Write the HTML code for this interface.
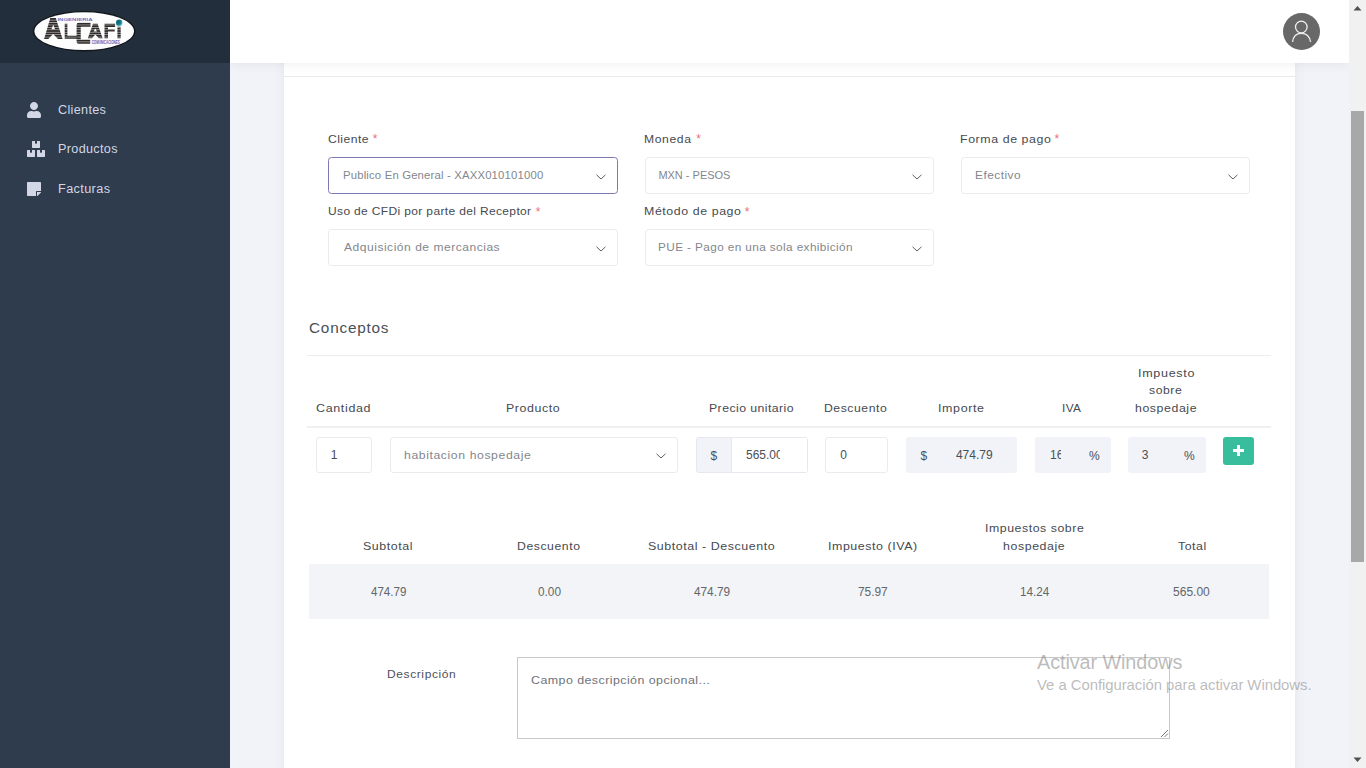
<!DOCTYPE html>
<html><head><meta charset="utf-8"><title>Factura</title>
<style>
*{box-sizing:border-box;margin:0;padding:0}
html,body{width:1366px;height:768px;overflow:hidden}
body{background:#f1f3f8;font-family:"Liberation Sans",sans-serif;position:relative}
.t{position:absolute;white-space:pre;line-height:normal;font-family:"Liberation Sans",sans-serif}
.abs{position:absolute}
#sidebar{left:0;top:0;width:230px;height:768px;background:#2e3c4e}
#brand{left:0;top:0;width:230px;height:63px;background:#222e3c}
#card{left:284px;top:-40px;width:1011px;height:900px;background:#fff;box-shadow:0 0 12px rgba(20,20,40,0.06)}
#header{left:230px;top:0;width:1119px;height:63px;background:#fff;box-shadow:0 2px 10px rgba(0,0,0,0.06)}
.sel{position:absolute;height:37px;border:1px solid #e9ebef;border-radius:3.5px;background:#fff}
.chev{position:absolute;width:10px;height:6px}
.inp{position:absolute;height:36px;border:1px solid #e9ebef;border-radius:3px;background:#fff}
.grp{position:absolute;height:36px;background:#f1f3f8;border-radius:3px}
.hline{position:absolute;height:1px;background:#ebedf0}
#scroll{left:1349px;top:0;width:17px;height:768px;background:#f1f1f1}
#thumb{left:1351px;top:111px;width:13px;height:451px;background:#a8a8a8}
</style></head>
<body>
<div id="card" class="abs"></div>
<div class="hline" style="left:284px;top:76px;width:1011px;background:#e8e9ec"></div>
<div id="header" class="abs"></div>
<div id="sidebar" class="abs"></div>
<div id="brand" class="abs"></div>

<!-- logo -->
<svg class="abs" style="left:0;top:0" width="230" height="63" viewBox="0 0 230 63">
  <defs>
    <pattern id="stripes" x="0" y="18.1" width="4" height="2.42" patternUnits="userSpaceOnUse">
      <rect x="0" y="0" width="4" height="1.95" fill="#302b2b"/>
    </pattern>
    <radialGradient id="globe" cx="0.35" cy="0.35" r="0.7">
      <stop offset="0" stop-color="#0c5f70"/><stop offset="0.6" stop-color="#1a8090"/><stop offset="1" stop-color="#8fd6dc"/>
    </radialGradient>
  </defs>
  <ellipse cx="84.2" cy="31.2" rx="51.2" ry="20.2" fill="#0d0d0d" opacity="0.75"/>
  <ellipse cx="84.2" cy="31.2" rx="49.8" ry="18.9" fill="#fdfdfd"/>
  <g fill="url(#stripes)">
    <path fill-rule="evenodd" d="M44.1 39 L50.3 18.1 L55.8 18.1 L62.6 39 L58 39 L53.1 34 L48.3 39 Z M51.4 29.2 L55.1 29.2 L53.25 24.8 Z"/>
    <path d="M64.7 23.75 L67.4 23.75 L67.4 35.8 L77 35.8 L77 38.75 L64.7 38.75 Z"/>
    <path d="M78.6 22.8 L90.5 22.8 L90.5 26.7 L80.75 26.7 L80.75 39.6 L90.2 39.6 L90.2 43.75 L78.6 43.75 Q76.6 43.75 76.6 41.75 L76.6 24.8 Q76.6 22.8 78.6 22.8 Z"/>
    <path fill-rule="evenodd" d="M87.8 38.3 L93 23.75 L97.6 23.75 L102.6 38.3 L98.8 38.3 L95.3 34.6 L92 38.3 Z M93.6 31.5 L97 31.5 L95.3 28.6 Z"/>
    <path d="M104.5 23.75 L115.1 23.75 L115.1 27.1 L108 27.1 L108 29.2 L114.7 29.2 L114.7 31.6 L108 31.6 L108 38.3 L104.5 38.3 Z"/>
    <path d="M117.4 26.7 L120.7 26.7 L120.7 38.3 L117.4 38.3 Z"/>
  </g>
  <text x="57.4" y="20.7" font-family="Liberation Sans" font-size="3.2" font-weight="bold" fill="#7a70bd" textLength="35.2" lengthAdjust="spacingAndGlyphs">INGENIERIA</text>
  <text x="91.7" y="43.8" font-family="Liberation Sans" font-size="4.9" font-weight="bold" fill="#6356ad" textLength="28" lengthAdjust="spacingAndGlyphs">COMUNICACIONES</text>
  <circle cx="119.25" cy="22.9" r="3.3" fill="url(#globe)"/>
</svg>

<!-- sidebar icons -->
<svg class="abs" style="left:27px;top:102px" width="14" height="16" viewBox="0 0 448 512"><path fill="#d3d6e4" d="M224 256c70.7 0 128-57.3 128-128S294.7 0 224 0 96 57.3 96 128s57.3 128 128 128zm89.6 32h-16.7c-22.2 10.2-46.9 16-72.9 16s-50.6-5.8-72.9-16h-16.7C60.2 288 0 348.2 0 422.4V464c0 26.5 21.5 48 48 48h352c26.5 0 48-21.5 48-48v-41.6c0-74.2-60.2-134.4-134.4-134.4z"/></svg>
<svg class="abs" style="left:27px;top:141px" width="18" height="16" viewBox="0 0 576 512"><path fill="#d3d6e4" d="M560 288h-80v96l-32-21.3-32 21.3v-96h-80c-8.8 0-16 7.2-16 16v192c0 8.8 7.2 16 16 16h224c8.8 0 16-7.2 16-16V304c0-8.8-7.2-16-16-16zm-384-64h224c8.8 0 16-7.2 16-16V16c0-8.8-7.2-16-16-16h-80v96l-32-21.3L256 96V0h-80c-8.8 0-16 7.2-16 16v192c0 8.8 7.2 16 16 16zm64 64h-80v96l-32-21.3L96 384v-96H16c-8.8 0-16 7.2-16 16v192c0 8.8 7.2 16 16 16h224c8.8 0 16-7.2 16-16V304c0-8.8-7.2-16-16-16z"/></svg>
<svg class="abs" style="left:27px;top:181px" width="14" height="16" viewBox="0 0 448 512"><path fill="#d3d6e4" d="M312 320h136V56c0-13.3-10.7-24-24-24H24C10.7 32 0 42.7 0 56v400c0 13.3 10.7 24 24 24h264V344c0-13.2 10.8-24 24-24zm129 55l-98 98c-4.5 4.5-10.6 7-17 7h-6V352h128v6.1c0 6.3-2.5 12.4-7 16.9z"/></svg>

<!-- avatar -->
<svg class="abs" style="left:1283px;top:13px" width="37" height="37" viewBox="0 0 37 37"><circle cx="18.5" cy="18.5" r="18.5" fill="#686868"/><circle cx="18.3" cy="14" r="5.8" fill="none" stroke="#f0f0f0" stroke-width="1.3"/><path d="M9.6 29 Q10.5 20.4 18.3 20.4 Q26.1 20.4 27.6 29" fill="none" stroke="#f0f0f0" stroke-width="1.3"/></svg>

<!-- selects row 1 -->
<div class="sel" style="left:328px;top:157px;width:290px;border-color:#7d7ab3"></div>
<div class="sel" style="left:645px;top:157px;width:289px"></div>
<div class="sel" style="left:961px;top:157px;width:289px"></div>
<div class="sel" style="left:328px;top:229px;width:290px"></div>
<div class="sel" style="left:645px;top:229px;width:289px"></div>
<svg class="chev" style="left:596px;top:174px" viewBox="0 0 10 6"><path d="M0.5 0.8 L5 5 L9.5 0.8" fill="none" stroke="#5f5f5f" stroke-width="1"/></svg>
<svg class="chev" style="left:912px;top:174px" viewBox="0 0 10 6"><path d="M0.5 0.8 L5 5 L9.5 0.8" fill="none" stroke="#5f5f5f" stroke-width="1"/></svg>
<svg class="chev" style="left:1228px;top:174px" viewBox="0 0 10 6"><path d="M0.5 0.8 L5 5 L9.5 0.8" fill="none" stroke="#5f5f5f" stroke-width="1"/></svg>
<svg class="chev" style="left:596px;top:246px" viewBox="0 0 10 6"><path d="M0.5 0.8 L5 5 L9.5 0.8" fill="none" stroke="#5f5f5f" stroke-width="1"/></svg>
<svg class="chev" style="left:912px;top:246px" viewBox="0 0 10 6"><path d="M0.5 0.8 L5 5 L9.5 0.8" fill="none" stroke="#5f5f5f" stroke-width="1"/></svg>

<!-- conceptos lines -->
<div class="hline" style="left:307px;top:355px;width:964px"></div>
<div class="hline" style="left:307px;top:426px;width:964px;height:2px;background:#eef0f2"></div>

<!-- row inputs -->
<div class="inp" style="left:316px;top:437px;width:56px"></div>
<div class="inp" style="left:390px;top:437px;width:288px"></div>
<svg class="chev" style="left:656px;top:453px" viewBox="0 0 10 6"><path d="M0.5 0.8 L5 5 L9.5 0.8" fill="none" stroke="#5f5f5f" stroke-width="1"/></svg>
<div class="grp" style="left:696px;top:437px;width:112px;border:1px solid #e6e8ee"></div>
<div class="abs" style="left:732px;top:438px;width:75px;height:34px;background:#fff"></div>
<div class="abs" style="left:731px;top:438px;width:1px;height:34px;background:#e6e8ee"></div>
<div class="t" style="left:746px;top:447.5px;font-size:12px;color:#495057;width:34px;overflow:hidden">565.00</div>
<div class="inp" style="left:825px;top:437px;width:63px"></div>
<div class="grp" style="left:906px;top:437px;width:111px"></div>
<div class="grp" style="left:1035px;top:437px;width:76px"></div>
<div class="t" style="left:1050px;top:447.5px;font-size:12px;color:#495057;width:11px;overflow:hidden">16</div>
<div class="grp" style="left:1128px;top:437px;width:78px"></div>
<div class="abs" style="left:1223px;top:437px;width:31px;height:28px;background:#38bd9d;border-radius:3px"></div>
<div class="abs" style="left:1233px;top:449px;width:11px;height:3px;background:#fff"></div>
<div class="abs" style="left:1237px;top:445px;width:3px;height:11px;background:#fff"></div>

<!-- totals -->
<div class="abs" style="left:309px;top:564px;width:960px;height:55px;background:#f3f4f7"></div>

<!-- textarea -->
<div class="abs" style="left:517px;top:657px;width:653px;height:82px;border:1px solid #c9c9c9;background:#fff"></div>
<svg class="abs" style="left:1160px;top:729px" width="9" height="9" viewBox="0 0 9 9"><path d="M8 1 L1 8 M8 4.5 L4.5 8" stroke="#777" stroke-width="1"/></svg>

<div class="t" style="left:57.9px;top:103.1px;font-size:12px;color:#d3d6e4;transform:scaleX(1.0536);transform-origin:0 0;letter-spacing:0.305px;">Clientes</div>
<div class="t" style="left:57.9px;top:142.0px;font-size:12px;color:#d3d6e4;transform:scaleX(1.0509);transform-origin:0 0;letter-spacing:0.321px;">Productos</div>
<div class="t" style="left:57.9px;top:182.1px;font-size:12px;color:#d3d6e4;transform:scaleX(1.0578);transform-origin:0 0;letter-spacing:0.351px;">Facturas</div>
<div class="t" style="left:327.7px;top:133.0px;font-size:11.3px;color:#464a51;transform:scaleX(1.0765);transform-origin:0 0;letter-spacing:0.403px;">Cliente</div>
<div class="t" style="left:644.2px;top:133.0px;font-size:11.3px;color:#464a51;transform:scaleX(1.0750);transform-origin:0 0;letter-spacing:0.558px;">Moneda</div>
<div class="t" style="left:959.5px;top:133.0px;font-size:11.3px;color:#464a51;transform:scaleX(1.0940);transform-origin:0 0;letter-spacing:0.537px;">Forma de pago</div>
<div class="t" style="left:327.6px;top:205.4px;font-size:11.3px;color:#464a51;transform:scaleX(1.0637);transform-origin:0 0;letter-spacing:0.325px;">Uso de CFDi por parte del Receptor</div>
<div class="t" style="left:644.2px;top:205.4px;font-size:11.3px;color:#464a51;transform:scaleX(1.0944);transform-origin:0 0;letter-spacing:0.531px;">Método de pago</div>
<div class="t" style="left:372.8px;top:132.3px;font-size:12px;color:#e8707c;">*</div>
<div class="t" style="left:696.2px;top:132.3px;font-size:12px;color:#e8707c;">*</div>
<div class="t" style="left:1054.6px;top:132.3px;font-size:12px;color:#e8707c;">*</div>
<div class="t" style="left:535.8px;top:204.7px;font-size:12px;color:#e8707c;">*</div>
<div class="t" style="left:744.8px;top:204.7px;font-size:12px;color:#e8707c;">*</div>
<div class="t" style="left:342.7px;top:169.0px;font-size:11px;color:#83878d;transform:scaleX(1.0298);transform-origin:0 0;letter-spacing:0.165px;">Publico En General - XAXX010101000</div>
<div class="t" style="left:658.4px;top:169.0px;font-size:11px;color:#83878d;letter-spacing:-0.010px;">MXN - PESOS</div>
<div class="t" style="left:974.5px;top:169.0px;font-size:11px;color:#83878d;transform:scaleX(1.0842);transform-origin:0 0;letter-spacing:0.422px;">Efectivo</div>
<div class="t" style="left:343.6px;top:240.9px;font-size:11px;color:#83878d;transform:scaleX(1.0947);transform-origin:0 0;letter-spacing:0.472px;">Adquisición de mercancias</div>
<div class="t" style="left:658.3px;top:240.9px;font-size:11px;color:#83878d;transform:scaleX(1.0725);transform-origin:0 0;letter-spacing:0.357px;">PUE - Pago en una sola exhibición</div>
<div class="t" style="left:308.6px;top:320.3px;font-size:14px;color:#4a5058;transform:scaleX(1.0947);transform-origin:0 0;letter-spacing:0.714px;">Conceptos</div>
<div class="t" style="left:315.6px;top:402.0px;font-size:11.3px;color:#464a51;transform:scaleX(1.1045);transform-origin:0 0;letter-spacing:0.595px;">Cantidad</div>
<div class="t" style="left:506.2px;top:402.0px;font-size:11.3px;color:#464a51;transform:scaleX(1.0955);transform-origin:0 0;letter-spacing:0.548px;">Producto</div>
<div class="t" style="left:708.7px;top:402.0px;font-size:11.3px;color:#464a51;transform:scaleX(1.0859);transform-origin:0 0;letter-spacing:0.401px;">Precio unitario</div>
<div class="t" style="left:824.4px;top:402.0px;font-size:11.3px;color:#464a51;transform:scaleX(1.0821);transform-origin:0 0;letter-spacing:0.503px;">Descuento</div>
<div class="t" style="left:937.5px;top:402.0px;font-size:11.3px;color:#464a51;transform:scaleX(1.1027);transform-origin:0 0;letter-spacing:0.574px;">Importe</div>
<div class="t" style="left:1062.4px;top:402.0px;font-size:11.3px;color:#464a51;transform:scaleX(1.0469);transform-origin:0 0;letter-spacing:0.358px;">IVA</div>
<div class="t" style="left:1137.9px;top:366.8px;font-size:11.3px;color:#464a51;transform:scaleX(1.1089);transform-origin:0 0;letter-spacing:0.631px;">Impuesto</div>
<div class="t" style="left:1149.3px;top:383.8px;font-size:11.3px;color:#464a51;transform:scaleX(1.0796);transform-origin:0 0;letter-spacing:0.498px;">sobre</div>
<div class="t" style="left:1135.0px;top:402.0px;font-size:11.3px;color:#464a51;transform:scaleX(1.0912);transform-origin:0 0;letter-spacing:0.533px;">hospedaje</div>
<div class="t" style="left:330.7px;top:448.2px;font-size:12px;color:#495057;">1</div>
<div class="t" style="left:403.7px;top:449.2px;font-size:11px;color:#83878d;transform:scaleX(1.1102);transform-origin:0 0;letter-spacing:0.538px;">habitacion hospedaje</div>
<div class="t" style="left:710.6px;top:448.5px;font-size:12px;color:#495057;">$</div>
<div class="t" style="left:920.5px;top:448.5px;font-size:12px;color:#495057;">$</div>
<div class="t" style="left:840.2px;top:448.2px;font-size:12px;color:#495057;">0</div>
<div class="t" style="left:955.9px;top:448.2px;font-size:12px;color:#495057;">474.79</div>
<div class="t" style="left:1141.8px;top:448.2px;font-size:12px;color:#495057;">3</div>
<div class="t" style="left:1088.9px;top:448.5px;font-size:12px;color:#495057;">%</div>
<div class="t" style="left:1184.0px;top:448.5px;font-size:12px;color:#495057;">%</div>
<div class="t" style="left:363.3px;top:540.2px;font-size:11.3px;color:#464a51;transform:scaleX(1.1000);transform-origin:0 0;letter-spacing:0.519px;">Subtotal</div>
<div class="t" style="left:516.7px;top:540.2px;font-size:11.3px;color:#464a51;transform:scaleX(1.0840);transform-origin:0 0;letter-spacing:0.513px;">Descuento</div>
<div class="t" style="left:647.7px;top:540.2px;font-size:11.3px;color:#464a51;transform:scaleX(1.1005);transform-origin:0 0;letter-spacing:0.500px;">Subtotal - Descuento</div>
<div class="t" style="left:827.5px;top:540.2px;font-size:11.3px;color:#464a51;transform:scaleX(1.0993);transform-origin:0 0;letter-spacing:0.507px;">Impuesto (IVA)</div>
<div class="t" style="left:984.5px;top:522.0px;font-size:11.3px;color:#464a51;transform:scaleX(1.0921);transform-origin:0 0;letter-spacing:0.494px;">Impuestos sobre</div>
<div class="t" style="left:1002.8px;top:540.2px;font-size:11.3px;color:#464a51;transform:scaleX(1.0931);transform-origin:0 0;letter-spacing:0.543px;">hospedaje</div>
<div class="t" style="left:1178.1px;top:540.2px;font-size:11.3px;color:#464a51;transform:scaleX(1.0913);transform-origin:0 0;letter-spacing:0.481px;">Total</div>
<div class="t" style="left:371.1px;top:585.0px;font-size:12px;color:#62666b;transform:scaleX(0.9639);transform-origin:0 0;">474.79</div>
<div class="t" style="left:537.9px;top:585.0px;font-size:12px;color:#62666b;transform:scaleX(0.9826);transform-origin:0 0;">0.00</div>
<div class="t" style="left:693.5px;top:585.0px;font-size:12px;color:#62666b;transform:scaleX(0.9833);transform-origin:0 0;">474.79</div>
<div class="t" style="left:857.6px;top:585.0px;font-size:12px;color:#62666b;transform:scaleX(0.9897);transform-origin:0 0;">75.97</div>
<div class="t" style="left:1019.7px;top:585.0px;font-size:12px;color:#62666b;transform:scaleX(0.9793);transform-origin:0 0;">14.24</div>
<div class="t" style="left:1173.4px;top:585.0px;font-size:12px;color:#62666b;transform:scaleX(1.0029);transform-origin:0 0;">565.00</div>
<div class="t" style="left:387.3px;top:668.3px;font-size:10.8px;color:#4e5158;transform:scaleX(1.1109);transform-origin:0 0;letter-spacing:0.549px;">Descripción</div>
<div class="t" style="left:530.9px;top:673.9px;font-size:11.5px;color:#6f737a;transform:scaleX(1.0806);transform-origin:0 0;letter-spacing:0.405px;">Campo descripción opcional...</div>
<div class="t" style="left:1036.7px;top:650.7px;font-size:20px;color:rgba(120,120,120,0.5);transform:scaleX(0.9915);transform-origin:0 0;letter-spacing:-0.090px;">Activar Windows</div>
<div class="t" style="left:1036.7px;top:676.4px;font-size:15px;color:rgba(120,120,120,0.5);transform:scaleX(0.9930);transform-origin:0 0;letter-spacing:-0.050px;">Ve a Configuración para activar Windows.</div>

<!-- scrollbar -->
<div id="scroll" class="abs"></div>
<div id="thumb" class="abs"></div>
<svg class="abs" style="left:1349px;top:0" width="17" height="17" viewBox="0 0 17 17"><path d="M4.5 10.5 L8.5 6 L12.5 10.5 Z" fill="#505050"/></svg>
<svg class="abs" style="left:1349px;top:751px" width="17" height="17" viewBox="0 0 17 17"><path d="M4.5 6.5 L8.5 11 L12.5 6.5 Z" fill="#505050"/></svg>
</body></html>
